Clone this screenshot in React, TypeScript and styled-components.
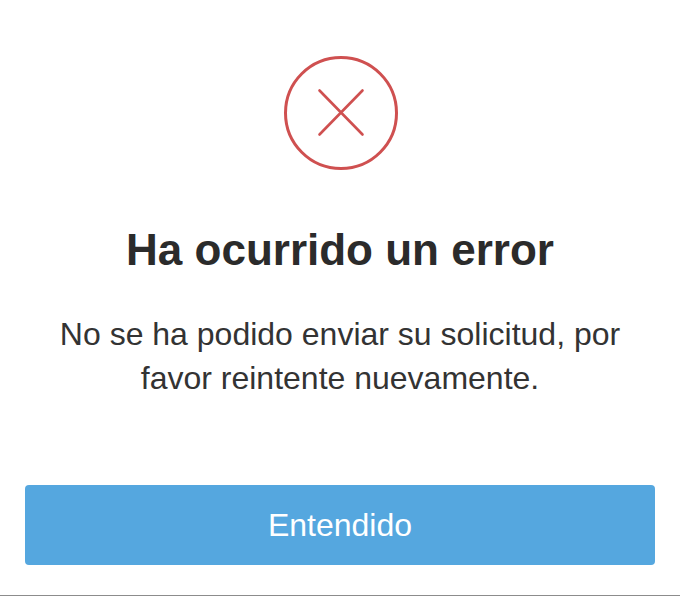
import React from "react";
import styled, { createGlobalStyle } from "styled-components";

const Global = createGlobalStyle`
  html, body { margin: 0; padding: 0; background: #fff; }
  body { font-family: "Liberation Sans", Arial, sans-serif; }
`;

const Modal = styled.div`
  width: 680px;
  height: 596px;
  box-sizing: border-box;
  padding: 56px 25px 30px;
  display: flex;
  flex-direction: column;
  align-items: center;
  background: #fff;
  border-bottom: 1px solid #8c8c8c;
  overflow: hidden;
`;

const IconWrap = styled.div`
  width: 114px;
  height: 114px;
  flex: none;
  margin-left: 2px;
`;

const Title = styled.h1`
  margin: 54px 0 0;
  font-size: 44px;
  line-height: 52px;
  font-weight: 700;
  color: #2b2b2b;
  text-align: center;
`;

const Message = styled.p`
  margin: 36px 0 0;
  font-size: 32px;
  line-height: 44px;
  font-weight: 400;
  color: #333;
  text-align: center;
`;

const Button = styled.button`
  margin-top: auto;
  width: 630px;
  height: 80px;
  border: 0;
  border-radius: 4px;
  background: #55a7df;
  color: #fff;
  font-family: inherit;
  font-size: 32px;
`;

export default function App() {
  return (
    <Modal>
      <Global />
      <IconWrap>
        <svg width="114" height="114" viewBox="0 0 114 114" fill="none" stroke="#cf5050">
          <circle cx="57" cy="57" r="55.5" strokeWidth="3" />
          <path d="M35.5 34.5 L78.5 78.5 M78.5 34.5 L35.5 78.5" strokeWidth="2.6" strokeLinecap="round" />
        </svg>
      </IconWrap>
      <Title>Ha ocurrido un error</Title>
      <Message>
        No se ha podido enviar su solicitud, por
        <br />
        favor reintente nuevamente.
      </Message>
      <Button>Entendido</Button>
    </Modal>
  );
}
